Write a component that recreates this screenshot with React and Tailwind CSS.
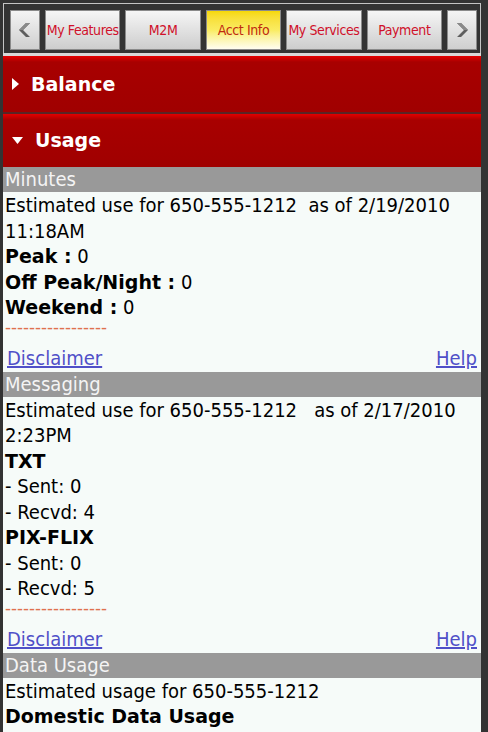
import React from 'react';

const tabs = ['My Features', 'M2M', 'Acct Info', 'My Services', 'Payment'];

const Arrow = ({ dir }) => (
  <div className="w-[30px] h-[40px] shrink-0 border border-[#8a8a8a] bg-gradient-to-b from-[#f4f4f4] to-[#cfcfcf] flex items-center justify-center">
    <svg width="14" height="16" viewBox="0 0 14 16">
      {dir === 'left' ? (
        <>
          <polygon points="12,1 5,8 12,15 8,15 1,8 8,1" fill="#5e5e5e" />
          <polygon points="12,1 5,8 1,8 8,1" fill="#8a8a8a" />
        </>
      ) : (
        <>
          <polygon points="2,1 9,8 2,15 6,15 13,8 6,1" fill="#5e5e5e" />
          <polygon points="2,1 9,8 13,8 6,1" fill="#8a8a8a" />
        </>
      )}
    </svg>
  </div>
);

const Tab = ({ label }) => {
  const active = label === 'Acct Info';
  return (
    <div
      className={
        active
          ? 'flex-1 h-[40px] border border-[#8a8a8a] bg-gradient-to-b from-[#f6d800] via-[#faec60] to-[#fffdf0] flex items-center justify-center text-[14px] text-[#c02a10] tracking-[-0.4px]'
          : 'flex-1 h-[40px] border border-[#8a8a8a] bg-gradient-to-b from-[#f6f6f6] to-[#cdcdcd] flex items-center justify-center text-[14px] text-[#d0102a] tracking-[-0.4px]'
      }
    >
      {label}
    </div>
  );
};

const RedBar = ({ label, open, h }) => (
  <div className={`${h} bg-[linear-gradient(to_bottom,#e40000_0px,#a80000_6px,#a00000_100%)] flex items-center pl-[9px] gap-[12px]`}>
    {open ? (
      <svg width="11" height="8" viewBox="0 0 11 8">
        <polygon points="0,0 11,0 5.5,7" fill="#ffffff" />
      </svg>
    ) : (
      <svg width="7" height="12" viewBox="0 0 7 12">
        <polygon points="0,0 7,6 0,12" fill="#ffffff" />
      </svg>
    )}
    <span className="text-white font-bold text-[19px] font-['DejaVu_Sans',sans-serif]">{label}</span>
  </div>
);

const SectionHead = ({ label }) => (
  <div className="h-[25px] bg-[#999999] text-[#f4f4f4] text-[20px] leading-[25px] pl-[2px]">{label}</div>
);

const B = ({ children }) => (
  <b className="font-bold text-[19px] font-['DejaVu_Sans',sans-serif]">{children}</b>
);

const Line = ({ children }) => <div className="leading-[25.5px]">{children}</div>;

const Dashes = () => (
  <div className="h-[25px] pl-[2px]">
    <div className="text-[18px] leading-[14px] text-[#e0704f] font-['Liberation_Sans',sans-serif]">-----------------</div>
  </div>
);

const Links = ({ pb }) => (
  <div className={`${pb} leading-[25px] flex justify-between px-[4px] text-[#5050c8] underline`}>
    <span>Disclaimer</span>
    <span>Help</span>
  </div>
);

export default function App() {
  return (
    <div className="w-[488px] h-[732px] overflow-hidden bg-[#333333] pt-[3px] pl-[3px] pr-[7px] font-['DejaVu_Sans_Condensed','DejaVu_Sans',sans-serif]">
      <div className="border-t border-l border-r border-[#c4c4c4] bg-[#333333] pt-[6px] pb-[3px] pl-[6px] pr-[3px] flex gap-[5px] font-['DejaVu_Sans_Condensed','Liberation_Sans',sans-serif]">
        <Arrow dir="left" />
        {tabs.map((t) => (
          <Tab key={t} label={t} />
        ))}
        <Arrow dir="right" />
      </div>
      <div className="h-[3px] bg-[#d8d8d8]" />
      <RedBar label="Balance" h="h-[56px]" />
      <div className="h-[2px] bg-[#5a2424]" />
      <RedBar label="Usage" open h="h-[53px]" />
      <div className="bg-[#f6fbf9] text-[20px] text-black h-[600px]">
        <SectionHead label="Minutes" />
        <div className="pl-[2px] pt-[1px]">
          <Line>Estimated use for 650-555-1212&nbsp; as of 2/19/2010</Line>
          <Line>11:18AM</Line>
          <Line><B>Peak :</B> 0</Line>
          <Line><B>Off Peak/Night :</B> 0</Line>
          <Line><B>Weekend :</B> 0</Line>
        </div>
        <Dashes />
        <Links pb="pb-[1px]" />
        <SectionHead label="Messaging" />
        <div className="pl-[2px] pt-[1px]">
          <Line>Estimated use for 650-555-1212&nbsp;&nbsp; as of 2/17/2010</Line>
          <Line>2:23PM</Line>
          <Line><B>TXT</B></Line>
          <Line>- Sent: 0</Line>
          <Line>- Recvd: 4</Line>
          <Line><B>PIX-FLIX</B></Line>
          <Line>- Sent: 0</Line>
          <Line>- Recvd: 5</Line>
        </div>
        <Dashes />
        <Links pb="pb-[1px]" />
        <SectionHead label="Data Usage" />
        <div className="pl-[2px] pt-[1px]">
          <Line>Estimated usage for 650-555-1212</Line>
          <Line><B>Domestic Data Usage</B></Line>
        </div>
      </div>
    </div>
  );
}
